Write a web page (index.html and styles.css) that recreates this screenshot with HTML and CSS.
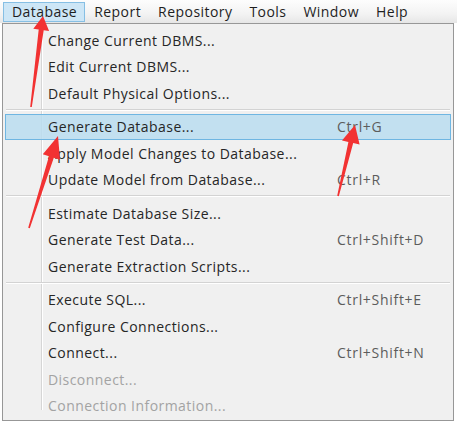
FILE: index.html
```html
<!DOCTYPE html>
<html>
<head>
<meta charset="utf-8">
<link rel="stylesheet" href="styles.css">
</head>
<body>
<div class="page">
  <div class="menubar">
    <span class="mb-item active">Database</span>
    <span class="mb-item">Report</span>
    <span class="mb-item">Repository</span>
    <span class="mb-item">Tools</span>
    <span class="mb-item">Window</span>
    <span class="mb-item">Help</span>
  </div>
  <div class="dropdown">
    <div class="row"><span class="label">Change Current DBMS...</span></div>
    <div class="row"><span class="label">Edit Current DBMS...</span></div>
    <div class="row"><span class="label">Default Physical Options...</span></div>
    <div class="sep"></div>
    <div class="row hl"><span class="label">Generate Database...</span><span class="key">Ctrl+G</span></div>
    <div class="row"><span class="label">Apply Model Changes to Database...</span></div>
    <div class="row"><span class="label">Update Model from Database...</span><span class="key">Ctrl+R</span></div>
    <div class="sep"></div>
    <div class="row"><span class="label">Estimate Database Size...</span></div>
    <div class="row"><span class="label">Generate Test Data...</span><span class="key">Ctrl+Shift+D</span></div>
    <div class="row"><span class="label">Generate Extraction Scripts...</span></div>
    <div class="sep"></div>
    <div class="row"><span class="label">Execute SQL...</span><span class="key">Ctrl+Shift+E</span></div>
    <div class="row"><span class="label">Configure Connections...</span></div>
    <div class="row"><span class="label">Connect...</span><span class="key">Ctrl+Shift+N</span></div>
    <div class="row disabled"><span class="label">Disconnect...</span></div>
    <div class="row disabled"><span class="label">Connection Information...</span></div>
  </div>
  <svg class="arrows" width="457" height="424" viewBox="0 0 457 424">
    <polygon points="43,16 49.1,30.9 43.7,30.2 31.8,107.1 30.2,106.9 38.7,29.6 33.3,28.8"/>
    <polygon points="58,136 60,159.7 53.8,157.8 29.8,228.2 28.2,227.8 49,156.2 42.8,154.3"/>
    <polygon points="355,125 359.6,144.6 353.2,143.1 338.8,196.2 337.2,195.8 348.4,141.9 342,140.4"/>
  </svg>
</div>
</body>
</html>
```
FILE: styles.css
```css
html, body {
  margin: 0;
  padding: 0;
  background: #ffffff;
}
.page {
  position: relative;
  width: 457px;
  height: 424px;
  overflow: hidden;
  font-family: "Open Sans", "Noto Sans", sans-serif;
  font-size: 13px;
  color: #262626;
}
.menubar {
  display: flex;
  align-items: center;
  height: 23px;
  padding-left: 3px;
  box-sizing: border-box;
  background: linear-gradient(to bottom, #fdfdfd 0%, #f3f3f3 60%, #e6e6e6 100%);
}
.mb-item {
  display: flex;
  align-items: center;
  height: 20px;
  padding: 0 7px 0 8px;
  border: 1px solid transparent;
  box-sizing: border-box;
  font-size: 14px;
  letter-spacing: 0.45px;
  color: #1e1e1e;
}
.mb-item.active {
  background: #cde6f6;
  border-color: #86bfe4;
}
.dropdown {
  margin-left: 2px;
  width: 452px;
  height: 398px;
  box-sizing: border-box;
  border: 1px solid #979797;
  padding: 3px 2px 0 2px;
  background:
    linear-gradient(to right, transparent 38px, #d6d6d6 38px, #d6d6d6 39px, #ffffff 39px, #ffffff 40px, transparent 40px) no-repeat 0 0 / 100% 386px,
    #f0f0f0;
  background-origin: padding-box;
}
.row {
  display: flex;
  align-items: center;
  height: 26.5px;
  box-sizing: border-box;
  border: 1px solid transparent;
  padding-left: 42px;
  font-size: 14px;
  letter-spacing: 0.45px;
}
.row .label {
  width: 289px;
  flex: none;
  white-space: nowrap;
}
.row .key {
  color: #5c5c5c;
  white-space: nowrap;
  letter-spacing: 0.7px;
}
.row.hl {
  background: rgba(186, 221, 240, 0.85);
  border-color: #6fb6e2;
}
.row.disabled {
  color: #a3a3a3;
}
.sep {
  height: 7px;
  box-sizing: border-box;
  padding-top: 2px;
  margin: 0 1px;
}
.sep::before {
  content: "";
  display: block;
  height: 1px;
  background: #d3d3d3;
  border-bottom: 1px solid #ffffff;
}
.arrows {
  position: absolute;
  left: 0;
  top: 0;
  pointer-events: none;
}
.arrows polygon {
  fill: #f23232;
}
```
